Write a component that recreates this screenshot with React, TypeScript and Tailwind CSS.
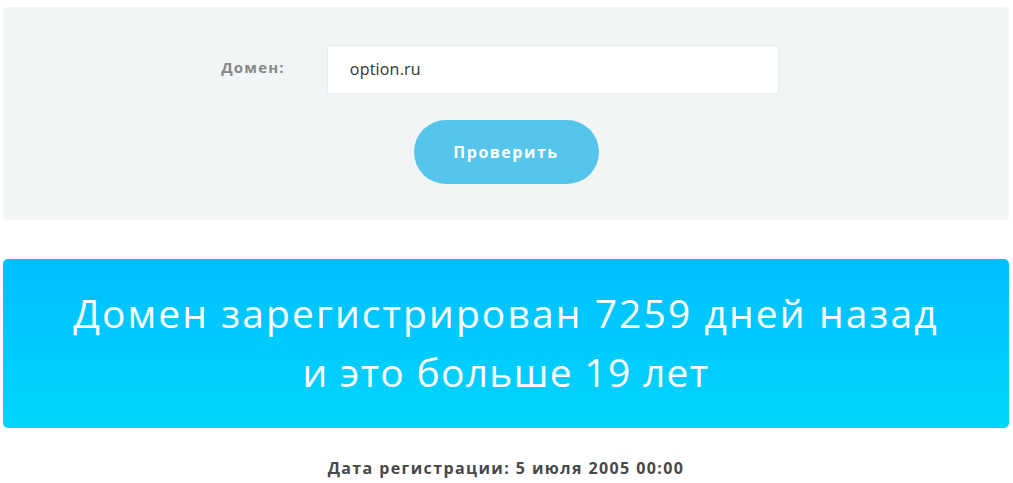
import React from "react";

export default function App() {
  return (
    <div className="w-[1013px] min-h-[483px] bg-white px-[3px] pt-[7px] pr-[4px]" style={{ fontFamily: '"Open Sans", "Noto Sans", sans-serif' }}>
      <div className="h-[213px] rounded-[5px] bg-[#f2f5f6] pt-[38px] flex flex-col items-center">
        <div className="flex items-center pr-[12px]">
          <label className="text-[15px] font-bold text-[#888888] tracking-[1.2px] pb-[4px]">Домен:</label>
          <div className="ml-[42px] w-[452px] h-[49px] bg-white border border-[#e8ecee] rounded-[2px] flex items-center pl-[22px] pb-[1px]">
            <span className="text-[16px] text-[#333333] tracking-[0.2px]">option.ru</span>
          </div>
        </div>
        <button className="mt-[26px] w-[185px] h-[64px] rounded-full bg-[#55c5ec] text-white text-[16px] font-bold tracking-[1.5px]">
          Проверить
        </button>
      </div>
      <div className="mt-[39px] h-[169px] rounded-[5px] bg-gradient-to-b from-[#00bfff] to-[#00d5fd] flex flex-col items-center justify-center pb-[3px]">
        <div className="text-white text-[39px] leading-[59px] text-center">
          <div className="tracking-[2.1px]">Домен зарегистрирован 7259 дней назад</div>
          <div className="tracking-[1.3px]">и это больше 19 лет</div>
        </div>
      </div>
      <div className="mt-[28px] text-center text-[16px] font-bold text-[#484848] tracking-[1.4px]">
        Дата регистрации: 5 июля 2005 00:00
      </div>
    </div>
  );
}
